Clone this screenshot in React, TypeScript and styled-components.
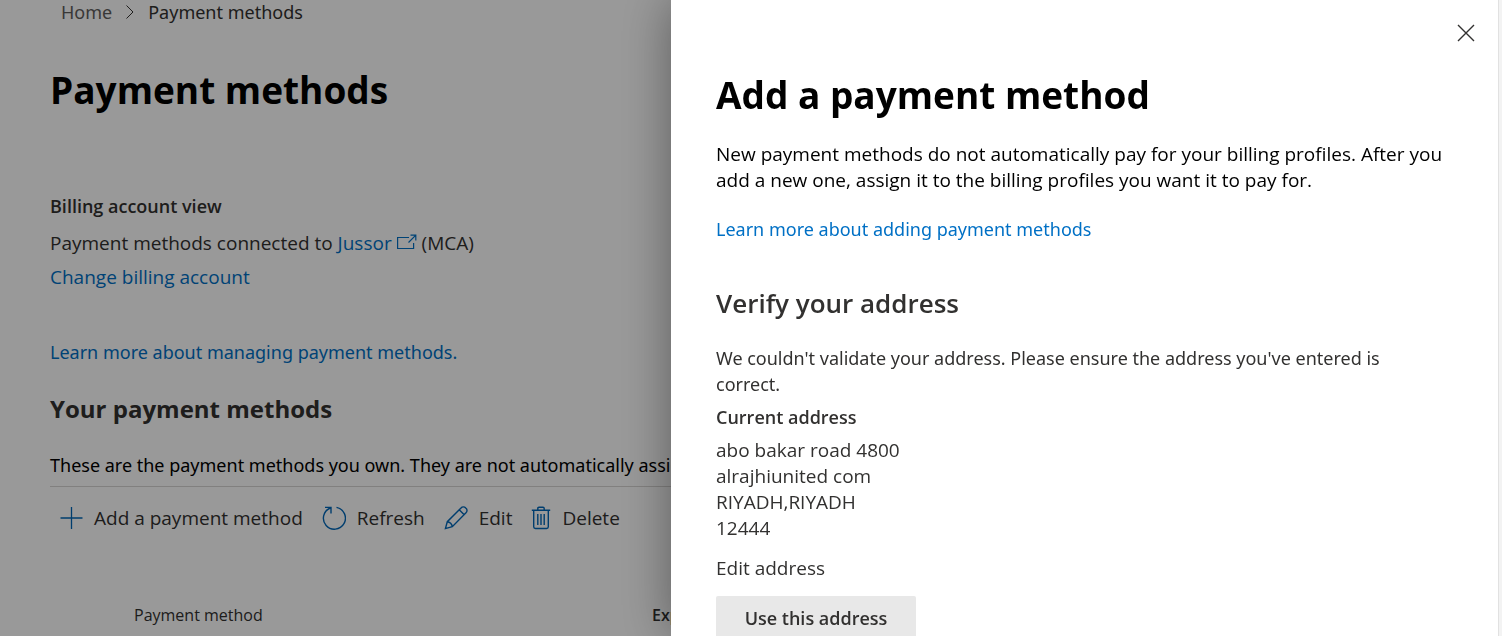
import React from "react";
import styled, { createGlobalStyle, css } from "styled-components";

const GlobalStyle = createGlobalStyle`
  *, *::before, *::after { box-sizing: border-box; }
  body {
    margin: 0;
    overflow: hidden;
    background: #fff;
    color: #323130;
    font: 400 19px/26px "Open Sans", sans-serif;
  }
  h1, h2, h3, p, address { margin: 0; font-style: normal; }
`;

const compactText = css`
  font-family: "Noto Sans", sans-serif;
  font-size: 18px;
`;

const Page = styled.main`
  display: flex;
  flex-direction: column;
  height: 100vh;
  padding: 0 50px;
  overflow: hidden;
`;

const Breadcrumb = styled.nav`
  ${compactText}
  display: flex;
  align-items: center;
  gap: 13px;
  height: 24px;
  padding-left: 11px;
`;

const Crumb = styled.a<{ $current?: boolean }>`
  color: ${(p) => (p.$current ? "#323130" : "#605e5c")};
  text-decoration: none;
`;

const Title = styled.h1`
  color: #000;
  font-size: 37px;
  font-weight: 700;
  line-height: 52px;
`;

const PageTitle = styled(Title)`
  margin-top: 40px;
`;

const Account = styled.section`
  margin-top: 77px;
`;

const Label = styled.h3`
  font-size: 18px;
  font-weight: 600;
  line-height: 26px;
`;

const AccountLine = styled.p`
  margin-top: 11px;
`;

const Link = styled.a`
  color: #0070c5;
  text-decoration: none;
`;

const ChangeLine = styled.p`
  margin-top: 8px;
`;

const LearnLine = styled.p`
  ${compactText}
  margin-top: 49px;
`;

const SectionTitle = styled.h2`
  margin-top: 26px;
  font-size: 24px;
  font-weight: 700;
  line-height: 36px;
`;

const Intro = styled.p`
  ${compactText}
  margin-top: 25px;
  padding-bottom: 8px;
  border-bottom: 1px solid #d8d6d4;
  color: #000;
  white-space: nowrap;
`;

const Toolbar = styled.div`
  display: flex;
  gap: 19px;
  padding: 18px 10px;
`;

const Command = styled.button`
  display: flex;
  align-items: center;
  gap: 11px;
  padding: 0;
  border: 0;
  background: none;
  color: #323130;
  font: inherit;
  white-space: nowrap;
  svg { flex: none; color: #0067b8; }
`;

const MethodTable = styled.table`
  margin-top: 53px;
  width: 100%;
  border-collapse: collapse;
  table-layout: fixed;
  font-size: 16px;
  text-align: left;
  th { padding: 0; }
`;

const SelectHead = styled.th`
  width: 84px;
`;

const NameHead = styled.th`
  width: 518px;
  font-weight: 400;
`;

const ExpiryHead = styled.th`
  font-weight: 600;
`;

const Overlay = styled.div`
  position: fixed;
  inset: 0;
  display: flex;
  justify-content: flex-end;
  background: rgba(0, 0, 0, 0.4);
`;

const Panel = styled.aside`
  width: 831px;
  max-width: 100%;
  padding: 20px 56px 0 45px;
  overflow: hidden;
  background: #fff;
  box-shadow: inset -3px 0 #f3f3f3, inset -4px 0 #e1e1e1, 0 0 48px rgba(0, 0, 0, 0.4);
`;

const PanelTop = styled.header`
  display: flex;
  justify-content: flex-end;
  margin-right: -33px;
`;

const Close = styled.button`
  display: flex;
  padding: 4px;
  border: 0;
  background: none;
  color: #323130;
`;

const PanelTitle = styled(Title)`
  margin-top: 23px;
`;

const PanelText = styled.p<{ $gap: number; $strong?: boolean; $compact?: boolean }>`
  ${(p) => p.$compact && compactText}
  margin-top: ${(p) => p.$gap}px;
  color: ${(p) => (p.$strong ? "#000" : "inherit")};
`;

const VerifyTitle = styled.h2`
  margin-top: 42px;
  font-size: 26px;
  font-weight: 600;
  line-height: 38px;
`;

const AddressLabel = styled(Label)`
  margin-top: 7px;
`;

const Address = styled.address`
  margin-top: 7px;
`;

const EditAddress = styled.button`
  display: block;
  margin-top: 14px;
  padding: 0;
  border: 0;
  background: none;
  color: inherit;
  font: inherit;
`;

const UseAddress = styled.button`
  width: 200px;
  height: 44px;
  margin-top: 15px;
  padding: 0;
  border: 0;
  border-radius: 2px;
  background: #e8e8e8;
  color: #323130;
  font: 600 18px/26px "Open Sans", sans-serif;
`;

const line = { fill: "none", stroke: "currentColor", "aria-hidden": true } as const;

const Chevron = () => (
  <svg width="10" height="16" viewBox="0 0 10 16" {...line}>
    <path d="M1.5 1.5 8 8l-6.500 6.500" />
  </svg>
);

const External = () => (
  <svg width="20" height="16" viewBox="0 0 20 16" {...line} strokeWidth="1.2">
    <path d="M12 3.500H.6v11h16V9M11.500 8.500 18.600 1.400M13.500 1.200h5.300v5.300" />
  </svg>
);

const Plus = () => (
  <svg width="23" height="24" viewBox="0 0 23 24" {...line} strokeWidth="1.3">
    <path d="M11.500 1v22M.5 12h22" />
  </svg>
);

const RefreshIcon = () => (
  <svg width="24" height="24" viewBox="0 0 24 24" {...line} strokeWidth="1.4">
    <path d="M14.500 1.400A11 11 0 1 1 8.300 2M3 1.400h6v6" />
  </svg>
);

const Pencil = () => (
  <svg width="24" height="24" viewBox="0 0 24 24" {...line} strokeWidth="1.4">
    <path d="M1.400 22.600 3.300 15.700 17 2a3 3 0 0 1 4.700 0 3 3 0 0 1 .3 4.700L8.300 20.700ZM15.200 3.800l5 5M3.300 15.700c2.500.2 4.800 2.500 5 5" />
  </svg>
);

const Bin = () => (
  <svg width="20" height="24" viewBox="0 0 20 24" {...line} strokeWidth="1.400">
    <path d="M.8 4.200h18.400M6.800 4V2.400Q6.800 1.200 8 1.200h4q1.200 0 1.200 1.200V4M2.700 4.200v16.600q0 1.700 1.700 1.700h11.200q1.700 0 1.700-1.700V4.200M6.800 8v11M10 8v11M13.200 8v11" />
  </svg>
);

const CloseIcon = () => (
  <svg width="18" height="18" viewBox="0 0 18 18" {...line} strokeWidth="1.400">
    <path d="m1 1 16 16M17 1 1 17" />
  </svg>
);

export default function App() {
  return (
    <>
      <GlobalStyle />
      <Page>
        <Breadcrumb aria-label="Breadcrumb">
          <Crumb href="#home">Home</Crumb>
          <Chevron />
          <Crumb href="#payment-methods" $current>Payment methods</Crumb>
        </Breadcrumb>
        <PageTitle>Payment methods</PageTitle>
        <Account>
          <Label>Billing account view</Label>
          <AccountLine>
            Payment methods connected to <Link href="#account">Jussor <External /></Link> (MCA)
          </AccountLine>
          <ChangeLine><Link href="#change">Change billing account</Link></ChangeLine>
        </Account>
        <LearnLine><Link href="#learn">Learn more about managing payment methods.</Link></LearnLine>
        <SectionTitle>Your payment methods</SectionTitle>
        <Intro>These are the payment methods you own. They are not automatically assigned</Intro>
        <Toolbar role="toolbar">
          <Command type="button"><Plus />Add a payment method</Command>
          <Command type="button"><RefreshIcon />Refresh</Command>
          <Command type="button"><Pencil />Edit</Command>
          <Command type="button"><Bin />Delete</Command>
        </Toolbar>
        <MethodTable>
          <thead>
            <tr>
              <SelectHead />
              <NameHead scope="col">Payment method</NameHead>
              <ExpiryHead scope="col">Expires</ExpiryHead>
            </tr>
          </thead>
        </MethodTable>
      </Page>
      <Overlay>
        <Panel role="dialog" aria-labelledby="panel-title">
          <PanelTop>
            <Close type="button" aria-label="Close"><CloseIcon /></Close>
          </PanelTop>
          <PanelTitle id="panel-title">Add a payment method</PanelTitle>
          <PanelText $gap={20} $strong>
            New payment methods do not automatically pay for your billing profiles. After you add a new one, assign it
            to the billing profiles you want it to pay for.
          </PanelText>
          <PanelText $gap={23} $compact>
            <Link href="#learn-adding">Learn more about adding payment methods</Link>
          </PanelText>
          <VerifyTitle>Verify your address</VerifyTitle>
          <PanelText $gap={23} $compact>
            We couldn't validate your address. Please ensure the address you've entered is correct.
          </PanelText>
          <AddressLabel>Current address</AddressLabel>
          <Address>
            abo bakar road 4800<br />
            alrajhiunited com<br />
            RIYADH,RIYADH<br />
            12444
          </Address>
          <EditAddress type="button">Edit address</EditAddress>
          <UseAddress type="button">Use this address</UseAddress>
        </Panel>
      </Overlay>
    </>
  );
}
